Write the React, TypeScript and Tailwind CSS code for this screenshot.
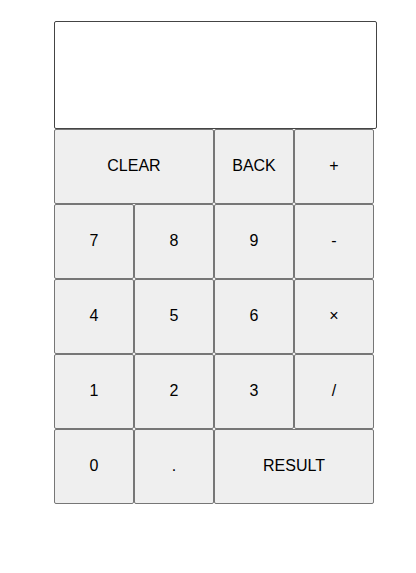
const rows: { label: string; span?: boolean }[] = [
  { label: "CLEAR", span: true },
  { label: "BACK" },
  { label: "+" },
  { label: "7" },
  { label: "8" },
  { label: "9" },
  { label: "-" },
  { label: "4" },
  { label: "5" },
  { label: "6" },
  { label: "×" },
  { label: "1" },
  { label: "2" },
  { label: "3" },
  { label: "/" },
  { label: "0" },
  { label: "." },
  { label: "RESULT", span: true },
];

export default function App() {
  return (
    <div className="min-h-screen bg-white pl-[54px] pt-[21px] font-['Liberation_Sans',Arial,sans-serif] text-black">
      <div className="h-[108px] w-[323px] rounded-[2px] border border-[#444]" />
      <div className="grid grid-cols-[repeat(4,80px)] auto-rows-[75px]">
        {rows.map((b) => (
          <button
            key={b.label}
            className={`${b.span ? "col-span-2" : ""} rounded-[2px] border border-[#767676] bg-[#efefef] pb-[2px] text-base`}
          >
            {b.label}
          </button>
        ))}
      </div>
    </div>
  );
}
